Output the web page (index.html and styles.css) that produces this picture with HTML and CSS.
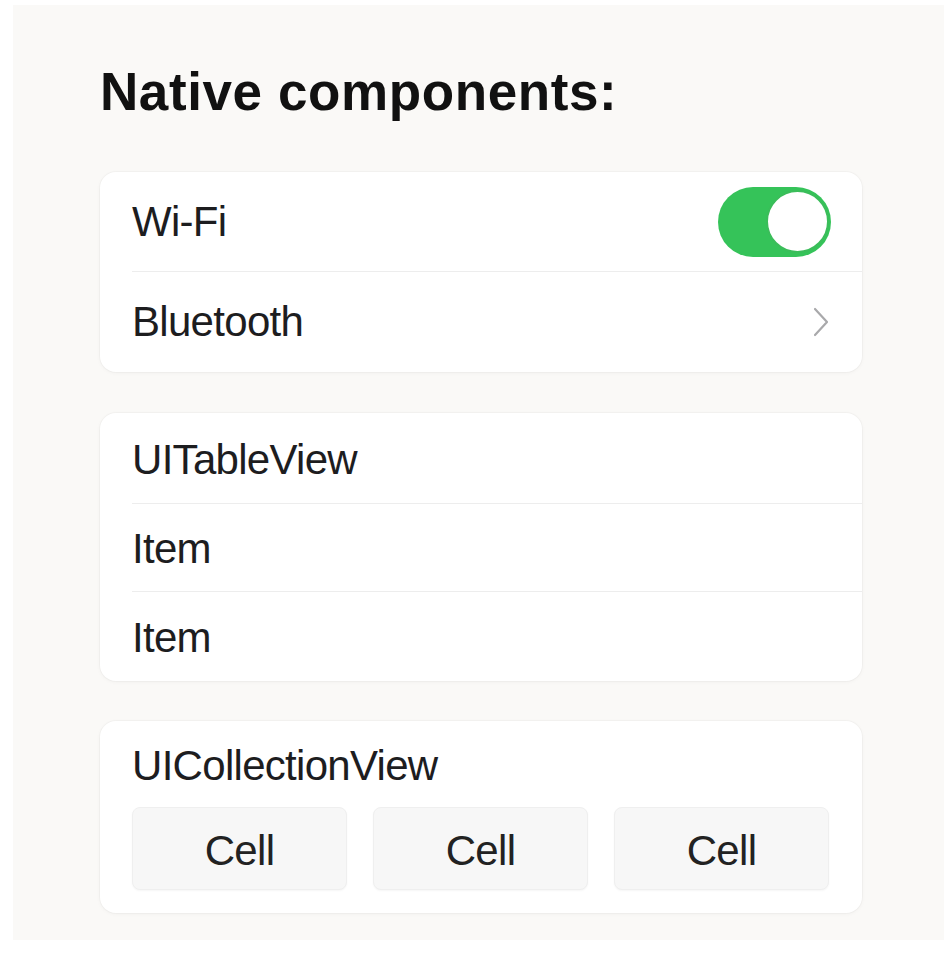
FILE: index.html
```html
<!DOCTYPE html>
<html lang="en">
<head>
  <meta charset="UTF-8">
  <meta name="viewport" content="width=device-width, initial-scale=1.0">
  <title>Native components</title>
  <link rel="stylesheet" href="styles.css">
</head>
<body>
  <div class="screen">
    <h1>Native components:</h1>

    <!-- Settings list -->
    <div class="card settings">
      <div class="row">
        <span>Wi-Fi</span>
        <div class="toggle on"><div class="knob"></div></div>
      </div>
      <div class="row">
        <span>Bluetooth</span>
        <svg class="chevron" width="16" height="30" viewBox="0 0 16 30">
          <path d="M2 2 L14 15 L2 28" fill="none" stroke="#a9a9ab" stroke-width="2.2" stroke-linecap="round" stroke-linejoin="round"/>
        </svg>
      </div>
    </div>

    <!-- Table view -->
    <div class="card table">
      <div class="row tall">UITableView</div>
      <div class="row mid">Item</div>
      <div class="row tall">Item</div>
    </div>

    <!-- Collection view -->
    <div class="card collection">
      <div class="collection-title">UICollectionView</div>
      <div class="cells">
        <div class="cell">Cell</div>
        <div class="cell">Cell</div>
        <div class="cell">Cell</div>
      </div>
    </div>
  </div>
</body>
</html>
```

FILE: styles.css
```css
body {
  margin: 0;
  padding: 0;
  background-color: #ffffff;
  font-family: "Liberation Sans", Arial, sans-serif;
  color: #1d1d1f;
}

.screen {
  margin: 5px 0 0 13px;
  height: 935px;
  box-sizing: border-box;
  padding: 60px 82px 0 87px;
  background-color: #faf9f7;
}

h1 {
  margin: 0 0 54px;
  font-size: 53px;
  line-height: 53px;
  font-weight: bold;
  letter-spacing: 0.6px;
  color: #111111;
}

.card {
  background: #ffffff;
  border-radius: 16px;
  box-shadow: 0 0 0 1px rgba(0, 0, 0, 0.025), 0 1px 4px rgba(0, 0, 0, 0.04);
  margin-bottom: 41px;
  overflow: hidden;
}

.card.table {
  margin-bottom: 40px;
}

.row {
  display: flex;
  align-items: center;
  justify-content: space-between;
  height: 100px;
  padding: 0 32px;
  font-size: 42px;
  line-height: 42px;
  letter-spacing: -0.7px;
  box-sizing: border-box;
  position: relative;
}

.row + .row::before {
  content: "";
  position: absolute;
  top: 0;
  left: 32px;
  right: 0;
  height: 1px;
  background: #ededed;
}

.settings .row:first-child {
  height: 99px;
}

.settings .row:last-child {
  height: 101px;
}

.table .row {
  padding-top: 4px;
}

.row.tall {
  height: 90px;
}

.row.mid {
  height: 88px;
}

.toggle {
  width: 113px;
  height: 70px;
  border-radius: 35px;
  background: #35c359;
  display: flex;
  align-items: center;
  justify-content: flex-end;
  padding: 0 2px;
  box-sizing: border-box;
  margin-right: -1px;
}

.knob {
  width: 63px;
  height: 63px;
  border-radius: 50%;
  background: #ffffff;
  border: 2px solid #3bbd5a;
  box-sizing: border-box;
}

.chevron {
  margin-right: 1px;
}

.collection {
  padding: 24px 33px 23px 32px;
}

.collection-title {
  font-size: 42px;
  line-height: 42px;
  letter-spacing: -0.7px;
  margin-bottom: 20px;
}

.cells {
  display: grid;
  grid-template-columns: repeat(3, 1fr);
  gap: 26px;
}

.cell {
  height: 83px;
  padding-top: 4px;
  display: flex;
  align-items: center;
  justify-content: center;
  background: #f7f7f7;
  border: 1px solid #efefef;
  border-radius: 8px;
  box-sizing: border-box;
  box-shadow: 0 1px 2px rgba(0, 0, 0, 0.04);
  font-size: 42px;
  letter-spacing: -0.7px;
  color: #222222;
}
```
